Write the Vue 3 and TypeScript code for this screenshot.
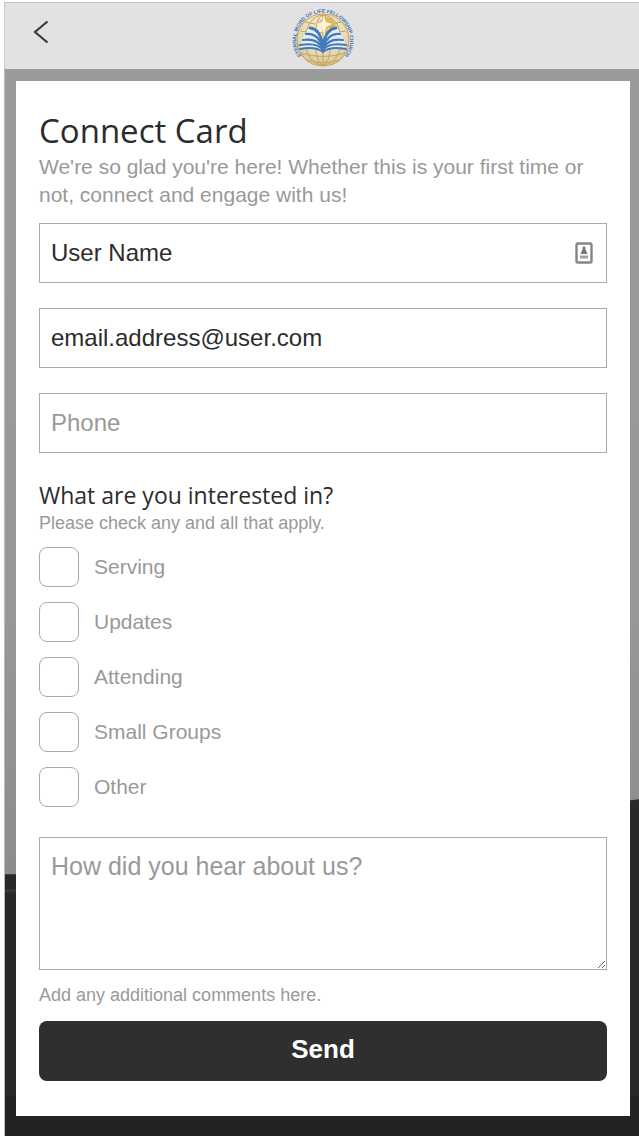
<script setup lang="ts">
import { ref } from 'vue'

const name = ref('User Name')
const email = ref('email.address@user.com')
const phone = ref('')
const comments = ref('')
const interests = ['Serving', 'Updates', 'Attending', 'Small Groups', 'Other']
const selected = ref<string[]>([])
</script>

<template>
  <div class="page">
    <header class="topbar">
      <button class="back" type="button" aria-label="Back">
        <svg width="20" height="26" viewBox="0 0 20 26" fill="none" stroke="#343c3e" stroke-width="2.2">
          <path d="M15.500 2.500 3 13l12.500 10.500" />
        </svg>
      </button>
      <svg class="logo" width="64" height="64" viewBox="0 0 64 64" role="img" aria-label="Church logo">
        <defs>
          <radialGradient id="globe" cx="50%" cy="32%" r="70%">
            <stop offset="0" stop-color="#fbf0cf" />
            <stop offset=".5" stop-color="#e9e0c4" />
            <stop offset="1" stop-color="#d8c694" />
          </radialGradient>
          <path id="ring" d="M18 58.200A27 27 0 1 1 48 58.200" />
        </defs>
        <circle cx="33" cy="36" r="26" fill="url(#globe)" stroke="#c9a962" stroke-width="1.200" />
        <g fill="none" stroke="#c5a35a" stroke-width="1">
          <ellipse cx="33" cy="36" rx="8" ry="25" />
          <ellipse cx="33" cy="36" rx="18" ry="25" />
          <path d="M33 11v50M15 18q18 5 36 0M10 27q23 4 46 0M8 41q25 6 50 0M11 49q22 7 44 0M18 56q15 5 30 0" />
        </g>
        <path fill="#dcb75d" d="M34 13l8 1 4 7-4 4-4-1-2 6-4-7-5-3z" />
        <path fill="#fff6d6" d="M34 12l2 6 6 2-6 3-2 8-2-8-6-3 6-2z" />
        <path fill="#e6edf3" d="M11 41Q13 31 19 25q10 2 14 14Q37 27 47 25q6 6 8 16v3q-12-2-22 3-10-5-22-3z" />
        <g fill="none" stroke="#4379bb" stroke-linecap="round">
          <path stroke-width="2.800" d="M20 24q11 1 13 20Q35 25 46 24" />
          <path stroke-width="2.200" d="M16 30q13-1 17 15 4-16 17-15" />
          <path stroke-width="2.200" d="M13 36q15-2 20 9 5-11 20-9" />
          <path stroke-width="2" d="M10 41q17-3 23 5 6-8 23-5" />
          <path stroke-width="2" d="M10 45q16-3 23 3 7-6 23-3" />
        </g>
        <text class="logo-text"><textPath href="#ring" startOffset="50%">ETERNAL WORD OF LIFE FELLOWSHIP CHURCH</textPath></text>
      </svg>
    </header>

    <main class="scene">
      <svg class="hills" viewBox="0 0 100 1068" preserveAspectRatio="none" aria-hidden="true">
        <path d="M0 806H2L100 731V1068H0z" fill="#292929" />
        <path d="M0 821H3V824H0z" fill="#383838" />
        <path d="M0 1028H100V1068H0z" fill="#232323" />
      </svg>
      <form class="card" @submit.prevent>
        <h1>Connect Card</h1>
        <p class="intro">We're so glad you're here! Whether this is your first time or not, connect and engage with us!</p>

        <div class="fields">
          <div class="field">
            <input v-model="name" type="text" aria-label="Name" />
            <svg class="contact" width="18" height="22" viewBox="0 0 18 22" aria-hidden="true">
              <rect x="1.500" y="1.500" width="15" height="19" rx="1.500" fill="#fff" stroke="#858585" stroke-width="2.400" />
              <path d="M9 4.500q2 0 1.500 3l2 4.500h-7l2-4.500Q7 4.500 9 4.500z" fill="#777" />
              <path d="M5 13.500h8v3H5z" fill="#a2a2a2" />
            </svg>
          </div>
          <input v-model="email" type="email" aria-label="Email" />
          <input v-model="phone" type="tel" aria-label="Phone" placeholder="Phone" />
        </div>

        <fieldset>
          <legend>What are you interested in?</legend>
          <p class="hint">Please check any and all that apply.</p>
          <div class="options">
            <label v-for="item in interests" :key="item">
              <input v-model="selected" type="checkbox" :value="item" />
              <span>{{ item }}</span>
            </label>
          </div>
        </fieldset>

        <textarea id="comments" v-model="comments" placeholder="How did you hear about us?"></textarea>
        <label class="hint" for="comments">Add any additional comments here.</label>
        <button class="send" type="submit">Send</button>
      </form>
    </main>
  </div>
</template>

<style>
body {
  margin: 0;
  background: #fff;
}
</style>

<style scoped>
* {
  box-sizing: border-box;
}

.page {
  display: flex;
  flex-direction: column;
  min-height: 100vh;
  padding: 2px 0 0 4px;
  font-family: "Liberation Sans", Arial, sans-serif;
  color: #999;
}

.topbar {
  display: grid;
  grid-template-columns: 1fr auto 1fr;
  align-items: center;
  height: 67px;
  background: #e2e2e2;
  border-top: 1px solid #c6c6c6;
  border-left: 1px solid #ccc;
}

.back {
  display: flex;
  justify-self: start;
  margin: 0 0 8px 27px;
  padding: 0;
  border: 0;
  background: none;
}

.logo {
  grid-column: 2;
}

.logo-text {
  font-size: 5px;
  font-weight: 700;
  fill: #3c70b4;
  text-anchor: middle;
}

.scene {
  position: relative;
  flex: 1;
  padding: 12px 9px 20px 11px;
  border-left: 1px solid #bbb;
  background: linear-gradient(#9b9b9b, #989898 50%, #8b8b8b 78%);
}

.hills {
  position: absolute;
  inset: 0;
  width: 100%;
  height: 100%;
}

.card {
  position: relative;
  display: flex;
  flex-direction: column;
  padding: 27px 23px 35px;
  background: #fff;
}

h1,
legend {
  font-family: "Open Sans", "Noto Sans", sans-serif;
  font-weight: 400;
  color: #2c2c2c;
}

h1 {
  margin: 0;
  font-size: 33px;
  line-height: 45px;
}

p {
  margin: 0;
}

.intro {
  font-size: 21px;
  line-height: 28px;
}

.fields {
  display: flex;
  flex-direction: column;
  gap: 25px;
  margin-top: 14px;
}

.field {
  position: relative;
  display: flex;
}

.fields input,
textarea {
  width: 100%;
  margin: 0;
  padding: 0 11px;
  border: 1px solid #aaa;
  border-radius: 0;
  outline: 0;
  background: #fff;
  font: 24px/30px "Liberation Sans", Arial, sans-serif;
  color: #2c2c2c;
}

.fields input {
  height: 60px;
}

::placeholder {
  color: #999;
  opacity: 1;
}

.contact {
  position: absolute;
  top: 19px;
  right: 14px;
}

fieldset {
  min-width: 0;
  margin: 26px 0 0;
  padding: 0;
  border: 0;
}

legend {
  padding: 0;
  font-size: 23px;
  line-height: 32px;
}

.hint {
  font-size: 18px;
  line-height: 24px;
}

.options {
  display: flex;
  flex-direction: column;
  gap: 15px;
  margin-top: 12px;
}

.options label {
  display: flex;
  align-items: center;
  gap: 15px;
  font-size: 21px;
  line-height: 38px;
}

.options input {
  appearance: none;
  width: 40px;
  height: 40px;
  margin: 0;
  border: 1px solid #aaa;
  border-radius: 8px;
  background: #fff;
}

.options input:checked {
  background: #999;
}

textarea {
  height: 133px;
  margin-top: 30px;
  padding-top: 13px;
  font-size: 25px;
  resize: vertical;
}

label.hint {
  margin-top: 13px;
}

.send {
  height: 60px;
  margin-top: 14px;
  padding: 0 0 4px;
  border: 0;
  border-radius: 8px;
  background: #2f2f2f;
  font: 700 26px/30px "Liberation Sans", Arial, sans-serif;
  color: #fff;
}
</style>
